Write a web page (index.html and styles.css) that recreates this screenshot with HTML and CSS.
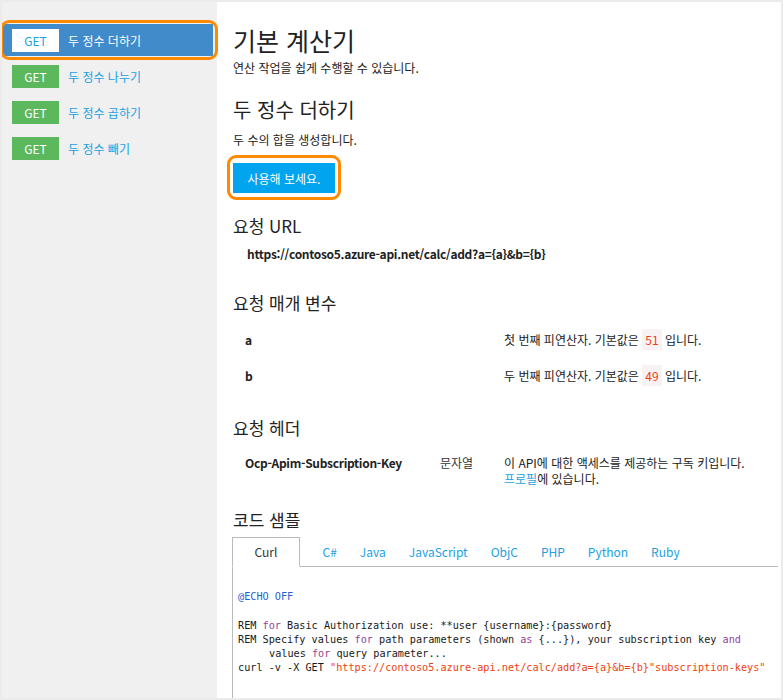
FILE: index.html
```html
<!DOCTYPE html>
<html lang="ko">
<head>
<meta charset="utf-8">
<title>기본 계산기</title>
<link rel="stylesheet" href="styles.css">
</head>
<body>
<div class="frame">
  <aside class="sidebar">
    <ul class="ops">
      <li class="op active"><span class="badge">GET</span><span class="op-name">두 정수 더하기</span></li>
      <li class="op"><span class="badge">GET</span><span class="op-name">두 정수 나누기</span></li>
      <li class="op"><span class="badge">GET</span><span class="op-name">두 정수 곱하기</span></li>
      <li class="op"><span class="badge">GET</span><span class="op-name">두 정수 빼기</span></li>
    </ul>
  </aside>
  <main class="content">
    <h1 class="title">기본 계산기</h1>
    <p class="lead">연산 작업을 쉽게 수행할 수 있습니다.</p>
    <h2 class="op-title">두 정수 더하기</h2>
    <p class="op-desc">두 수의 합을 생성합니다.</p>
    <div class="try-row"><button class="try">사용해 보세요.</button></div>

    <h3 class="section url-head">요청 URL</h3>
    <div class="url">https://contoso5.azure-api.net/calc/add?a={a}&amp;b={b}</div>

    <h3 class="section params-head">요청 매개 변수</h3>
    <div class="rows">
      <div class="row"><span class="name">a</span><span class="type"></span><span class="desc">첫 번째 피연산자. 기본값은 <code class="val">51</code> 입니다.</span></div>
      <div class="row"><span class="name">b</span><span class="type"></span><span class="desc">두 번째 피연산자. 기본값은 <code class="val">49</code> 입니다.</span></div>
    </div>

    <h3 class="section headers-head">요청 헤더</h3>
    <div class="rows">
      <div class="row"><span class="name">Ocp-Apim-Subscription-Key</span><span class="type">문자열</span><span class="desc">이 API에 대한 액세스를 제공하는 구독 키입니다.<br><a class="link" href="#">프로필</a>에 있습니다.</span></div>
    </div>

    <h3 class="section code-head">코드 샘플</h3>
    <div class="samples">
      <ul class="tabs">
        <li class="tab active">Curl</li>
        <li class="tab">C#</li>
        <li class="tab">Java</li>
        <li class="tab">JavaScript</li>
        <li class="tab">ObjC</li>
        <li class="tab">PHP</li>
        <li class="tab">Python</li>
        <li class="tab">Ruby</li>
      </ul>
      <div class="code">
        <span class="ln"><span class="kw-blue">@ECHO OFF</span></span>
        <span class="ln blank"></span>
        <span class="ln">REM <span class="kw">for</span> Basic Authorization use: **user {username}:{password}</span>
        <span class="ln">REM Specify values <span class="kw">for</span> path parameters (shown <span class="kw">as</span> {...}), your subscription key <span class="kw">and</span></span>
        <span class="ln cont">values <span class="kw">for</span> query parameter...</span>
        <span class="ln">curl -v -X GET <span class="str">"https://contoso5.azure-api.net/calc/add?a={a}&amp;b={b}"subscription-keys"</span></span>
      </div>
    </div>
  </main>
</div>
</body>
</html>
```
FILE: styles.css
```css
html, body {
  margin: 0;
  padding: 0;
  background: #fff;
}

.frame {
  width: 783px;
  height: 700px;
  box-sizing: border-box;
  border: 2px solid #ebebeb;
  display: flex;
  overflow: hidden;
  font-family: "Segoe UI", "Noto Sans CJK KR", sans-serif;
  color: #222;
}

/* sidebar */
.sidebar {
  flex: none;
  width: 215px;
  background: #f0f0f0;
  padding-top: 22px;
}

.ops {
  list-style: none;
  margin: 0;
  padding: 0;
}

.op {
  position: relative;
  display: flex;
  align-items: center;
  height: 32px;
  margin: 0 4px 4px 1px;
  padding-left: 9px;
  font-size: 12px;
  color: #1ba1e2;
}

.op.active {
  background: #428bca;
  color: #fff;
}

.op.active::after {
  content: "";
  position: absolute;
  left: -3px;
  right: -5px;
  top: -4px;
  bottom: -4px;
  border: 3px solid #ff8a00;
  border-radius: 9px;
}

.badge {
  flex: none;
  width: 47px;
  height: 23px;
  display: flex;
  align-items: center;
  justify-content: center;
  margin-right: 9px;
  background: #5cb85c;
  color: #fff;
  font-size: 12px;
}

.op.active .badge {
  background: #fff;
  color: #1ba1e2;
}

/* content */
.content {
  flex: 1;
  min-width: 0;
  padding-left: 16px;
}

.title {
  margin: 23px 0 0;
  font-size: 25px;
  line-height: 30px;
  font-weight: 400;
}

.lead {
  margin: 5px 0 0;
  font-size: 12px;
  line-height: 16px;
}

.op-title {
  margin: 21px 0 0;
  font-size: 20px;
  line-height: 26px;
  font-weight: 400;
}

.op-desc {
  margin: 9px 0 0;
  font-size: 12px;
  line-height: 16px;
}

.try-row {
  margin-top: 15px;
}

.try {
  position: relative;
  width: 102px;
  height: 30px;
  border: 0;
  padding: 0;
  background: #00a4ef;
  color: #fff;
  font-family: inherit;
  font-size: 12px;
}

.try::after {
  content: "";
  position: absolute;
  left: -6px;
  right: -6px;
  top: -8px;
  bottom: -7px;
  border: 3px solid #ff8a00;
  border-radius: 9px;
}

.section {
  margin: 0;
  font-size: 17px;
  line-height: 22px;
  font-weight: 400;
}

.url-head { margin-top: 22px; }
.params-head { margin-top: 30px; }
.headers-head { margin-top: 23px; }
.code-head { margin-top: 12px; }

.url {
  margin-top: 9px;
  padding-left: 14px;
  font-size: 12px;
  line-height: 16px;
  font-weight: 700;
  letter-spacing: -0.3px;
}

.params-head + .rows { margin-top: 8px; }
.headers-head + .rows { margin-top: 6px; }

.row {
  display: grid;
  grid-template-columns: 195px 64px 1fr;
  padding: 10px 0 10px 12px;
  font-size: 12px;
  line-height: 16px;
}

.name {
  font-weight: 700;
  letter-spacing: -0.3px;
}

.type {
  color: #333;
}

.val {
  font-family: inherit;
  font-size: 12px;
  padding: 2px 3px;
  background: #f9f2f4;
  color: #ee3d12;
}

.link {
  color: #1ba1e2;
  text-decoration: none;
}

/* code samples */
.samples {
  margin: 7px 0 0 -1px;
}

.tabs {
  list-style: none;
  margin: 0 3px 0 0;
  padding: 0;
  display: flex;
  height: 28px;
  border-bottom: 1px solid #bbb;
  font-size: 12px;
}

.tab {
  padding: 0 11.5px;
  line-height: 28px;
  color: #1ba1e2;
}

.tab.active {
  box-sizing: border-box;
  width: 68px;
  padding: 0;
  margin-right: 11px;
  text-align: center;
  color: #333;
  background: #fff;
  border: 1px solid #bbb;
  border-bottom-color: #fff;
  height: 30px;
  margin-top: -1px;
  line-height: 28px;
}

.code {
  min-height: 200px;
  border-left: 1px solid #bbb;
  padding: 23px 0 0 5px;
  font-family: "DejaVu Sans Mono", monospace;
  font-size: 10.2px;
  line-height: 14.3px;
  color: #1a1a1a;
}

.ln {
  display: block;
  white-space: pre;
  height: 14.3px;
}

.ln.cont {
  padding-left: 31px;
}

.kw { color: #93429a; }
.kw-blue { color: #1d5fd6; }
.str { color: #ee3f10; }
```
